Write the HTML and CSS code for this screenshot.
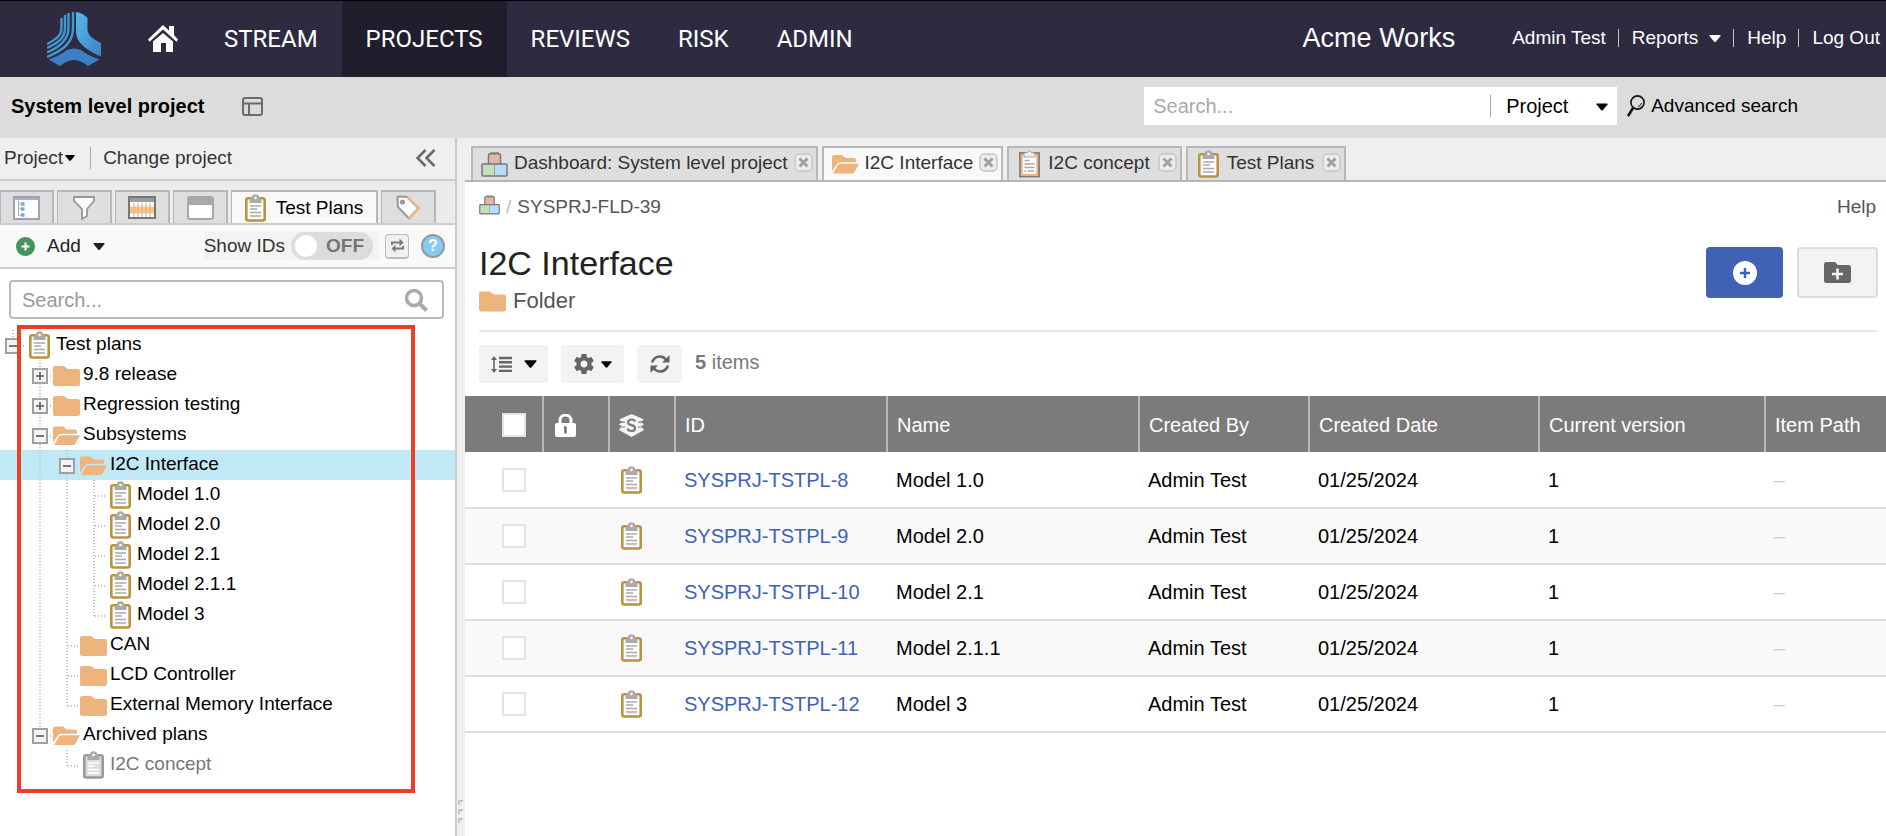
FILE: index.html
```
<!DOCTYPE html>
<html lang="en">

<head>
    <meta charset="UTF-8">
    <meta name="viewport" content="width=device-width, initial-scale=1.0">
    <title>I2C Interface - System level project</title>
    <link rel="stylesheet" href="styles.css">
</head>

<body>
    <!-- shared icons -->
    <svg class="sprite" aria-hidden="true">
        <symbol id="plan" viewBox="0 0 21 28">
            <rect x="1.3" y="4.3" width="18.4" height="22.2" rx="2" fill="#fff" stroke="#b8943c" stroke-width="2.6" />
            <path d="M4.500 9V6q0-2 2.300-2A3.700 3.700 0 0 1 14.200 4q2.300 0 2.300 2v3z" fill="#aaa" />
            <circle cx="10.500" cy="4" r="1.300" fill="#fff" />
            <path d="M5 12h11M5 15h7M5 18.500h11M5 22h11" stroke="#aaa" stroke-width="1.400" />
        </symbol>
        <symbol id="plan-gray" viewBox="0 0 21 28">
            <rect x="1.300" y="4.300" width="18.400" height="22.200" rx="2" fill="#ddd" stroke="#999" stroke-width="2.600" />
            <path d="M4.500 9V6q0-2 2.300-2A3.700 3.700 0 0 1 14.200 4q2.300 0 2.300 2v3z" fill="#aaa" />
            <circle cx="10.500" cy="4" r="1.300" fill="#fff" />
            <path d="M5 12h11M5 15h7M5 18.500h11M5 22h11" stroke="#fff" stroke-width="1.600" />
        </symbol>
        <symbol id="plan-case" viewBox="0 0 21 28">
            <rect x="1" y="3" width="19" height="23.500" fill="#fff" stroke="#7c7c7c" stroke-width="1.800" />
            <rect x="2.800" y="4.800" width="15.400" height="20" fill="none" stroke="#eeb27c" stroke-width="1.800" />
            <path d="M5 7V4q0-1 2-1.300h1.500a2 1.800 0 0 1 4 0H14q2 .3 2 1.300v3z" fill="#eee" stroke="#aaa" />
            <path d="M5.500 10.500h5M5.500 14h10M5.500 17.500h10M5.500 21h2M9 21h6" stroke="#aaa" stroke-width="1.400" />
        </symbol>
        <symbol id="folder" viewBox="0 0 27 20">
            <path d="M0 2q0-2 2-2h9l4 3h10q2 0 2 2v13q0 2-2 2H2q-2 0-2-2z" fill="#edb47e" />
        </symbol>
        <symbol id="folder-open" viewBox="0 0 27 19">
            <path d="M0 16V2q0-2 2-2h8l3.500 3H22q2 0 2 2v2.300H8.500Q6 7.300 5 9z" fill="#edb47e" />
            <path d="M1 18.600 6 10q.8-1.300 2.500-1.300H27L22.500 17q-.8 1.600-2.500 1.600z" fill="#edb47e" />
        </symbol>
        <symbol id="blocks" viewBox="0 0 27 25">
            <rect x="1" y="12" width="12.500" height="12" rx="1" fill="#c5dfbb" />
            <rect x="13.500" y="12" width="12.500" height="12" rx="1" fill="#b6defa" />
            <rect x="7.500" y="2" width="12" height="10" rx="1" fill="#e6b5ac" />
            <path d="M7.500 12V3q0-1 1-1h1.500V1h2.500v1h2V1H17v1h1.500q1 0 1 1v9M1 23V13q0-1 1-1h23q1 0 1 1v10q0 1-1 1H2q-1 0-1-1z" fill="none" stroke="#777" stroke-width="1.500" />
            <path d="M13.500 12v12" stroke="#9a9a9a" />
        </symbol>
        <symbol id="close" viewBox="0 0 19 19">
            <rect x="1" y="1" width="17" height="17" rx="4" fill="#ececec" stroke="#c4c4c4" stroke-width="1.400" />
            <path d="m5.500 5.500 8 8m0-8-8 8" stroke="#a2a2a2" stroke-width="3" />
        </symbol>
        <symbol id="arrow" viewBox="0 0 12 7">
            <path d="M1 0h10q1 0 .5 1L7 6.500q-1 1-2 0L.5 1Q0 0 1 0z" fill="currentColor" />
        </symbol>
        <symbol id="minus" viewBox="0 0 16 16">
            <rect x="1" y="1" width="14" height="14" fill="#f3f3f3" stroke="#a0a0a0" stroke-width="2" />
            <path d="M4 8h8" stroke="#555" stroke-width="1.600" />
        </symbol>
        <symbol id="plus" viewBox="0 0 16 16">
            <rect x="1" y="1" width="14" height="14" fill="#f3f3f3" stroke="#a0a0a0" stroke-width="2" />
            <path d="M4 8h8M8 4v8" stroke="#555" stroke-width="1.600" />
        </symbol>
    </svg>

    <header class="navbar">
        <svg class="logo" viewBox="0 0 54 55" role="img" aria-label="Logo">
            <defs>
                <linearGradient id="g1" x1="0" y1="0" x2="1" y2="1">
                    <stop offset="0" stop-color="#58b8ea" />
                    <stop offset="1" stop-color="#3b83c4" />
                </linearGradient>
            </defs>
            <path d="M29 0q7 1 11.500 6v12q0 7 13.500 13v13.500Q29 34 29 20z" fill="url(#g1)" />
            <path d="M26 0v16c0 14-9 22-26 29M21.500 1v15C21.500 28 13 35 0 40.500M18 3v13C18 26 11 31 0 36M14.500 6v10C14.500 23 10 27 0 32" fill="none" stroke="#4199d3" stroke-width="2.400" />
            <path d="M1.500 47.500Q14 43 20 38q7-3 14 0 6 5 18.500 9.500L41 54q-14-12-28 0z" fill="#3b7fc6" />
        </svg>
        <nav class="menu">
            <a class="home" href="#" aria-label="Home">
                <svg width="30" height="27" viewBox="0 0 30 27" fill="#fff">
                    <path d="M5 16.500 15 8l10 8.500V27h-7v-9h-5v9H5z" />
                    <path d="m15 0 6 5.500V1h5v9l4 4.500-1.500 2.300L15 4.500 1.500 16.800 0 14.500z" />
                    <path d="M3.500 16.300 15 6l11.500 10.300" fill="none" stroke="#2e2b41" />
                </svg>
            </a>
            <a href="#">STREAM</a>
            <a class="active" href="#">PROJECTS</a>
            <a href="#">REVIEWS</a>
            <a href="#">RISK</a>
            <a href="#">ADMIN</a>
        </nav>
        <span class="company">Acme Works</span>
        <div class="user-links">
            <a href="#">Admin Test</a>
            <a href="#">Reports <svg class="caret" width="12" height="7"><use href="#arrow" /></svg></a>
            <a href="#">Help</a>
            <a href="#">Log Out</a>
        </div>
    </header>

    <div class="project-bar">
        <h1>System level project</h1>
        <a class="layout-link" href="#" aria-label="Project layout">
            <svg width="21" height="19" viewBox="0 0 21 19" fill="none" stroke="#6b6b6b" stroke-width="2">
                <rect x="1" y="1" width="19" height="17" rx="2" />
                <path d="M1 6.500h19M7 6.500V18" />
            </svg>
        </a>
        <form class="global-search">
            <input type="text" placeholder="Search..." aria-label="Search projects">
            <div class="scope">
                <select aria-label="Search scope">
                    <option>Project</option>
                </select>
                <svg class="scope-arrow" width="12" height="8"><use href="#arrow" /></svg>
            </div>
        </form>
        <a class="advanced" href="#">
            <svg width="18" height="22" viewBox="0 0 18 22" fill="none" stroke="#111">
                <circle cx="10.500" cy="7.500" r="6.600" stroke-width="1.600" />
                <path d="m6 13-5 8" stroke-width="2.600" />
                <path d="M14.500 8q-.5 3-3.500 3.500" />
            </svg>
            Advanced search
        </a>
    </div>

    <div class="workspace">
        <aside class="sidebar">
            <div class="side-head">
                <a class="project-link" href="#">Project<svg width="10" height="6"><use href="#arrow" /></svg></a>
                <a class="change-link" href="#">Change project</a>
                <button class="collapse" aria-label="Collapse">
                    <svg width="20" height="18" viewBox="0 0 20 18" fill="none" stroke="#6b6b6b" stroke-width="2.600">
                        <path d="m9.500 1-8 8 8 8M18.500 1l-8 8 8 8" />
                    </svg>
                </button>
            </div>
            <div class="side-tabs">
                <button aria-label="Explorer">
                    <svg width="27" height="24" viewBox="0 0 27 24">
                        <rect x="1" y="1" width="25" height="22" fill="#fff" stroke="#9aa3b3" stroke-width="2" />
                        <path d="M1 3h25" stroke="#9fb4d0" stroke-width="2" />
                        <path d="M5.500 5v15M5.500 8h3M5.500 13h3M5.500 19h3" stroke="#9bb0c8" />
                        <path d="M8 8h3.500M8 13h3.500M8 19h3.500" stroke="#7fa9d8" stroke-width="3.500" />
                    </svg>
                </button>
                <button aria-label="Filters">
                    <svg width="22" height="24" viewBox="0 0 22 24">
                        <path d="M1 1h20v4l-7 8v7l-5 3V13L1 5z" fill="#fafafa" stroke="#999" stroke-width="1.800" />
                    </svg>
                </button>
                <button aria-label="Releases">
                    <svg width="28" height="23" viewBox="0 0 28 23">
                        <rect x="1" y="1" width="26" height="21" fill="#fff" stroke="#777" stroke-width="2" />
                        <path d="M2 4h24" stroke="#9c9c9c" stroke-width="4" />
                        <path d="M6 7v14M10 7v14M14 7v14M18 7v14M22 7v14" stroke="#bbb" stroke-width="1.200" />
                        <path d="M2 14h24" stroke="#f8c674" stroke-width="7" />
                        <path d="M6 10.500v7M10 10.500v7M14 10.500v7M18 10.500v7M22 10.500v7" stroke="#eeb088" stroke-width="1.200" />
                    </svg>
                </button>
                <button aria-label="Components">
                    <svg width="27" height="24" viewBox="0 0 27 24">
                        <rect x="1" y="1" width="25" height="22" rx="2" fill="#fff" stroke="#a8a8a8" stroke-width="2" />
                        <path d="M2 5h23" stroke="#a8a8a8" stroke-width="8" />
                    </svg>
                </button>
                <button class="active"><svg width="21" height="28"><use href="#plan" /></svg>Test Plans</button>
                <button aria-label="Tags">
                    <svg width="24" height="25" viewBox="0 0 24 25" fill="#fff" stroke-width="2">
                        <path d="M1.500 3q0-1.500 1.500-1.500L11 2l11.500 11-9.500 10.500L2 12z" stroke="#999" />
                        <path d="m11 2 11.500 11-9.500 10.500" fill="none" stroke="#edb47e" stroke-width="2.400" />
                        <circle cx="6.500" cy="7" r="2.600" fill="#999" />
                    </svg>
                </button>
            </div>
            <div class="side-tools">
                <button class="add">
                    <svg width="19" height="19" viewBox="0 0 19 19">
                        <circle cx="9.500" cy="9.500" r="9.500" fill="#43955c" />
                        <path d="M5.500 9.500h8m-4-4v8" stroke="#fff" stroke-width="2" />
                    </svg>
                    Add
                    <svg width="12" height="7"><use href="#arrow" /></svg>
                </button>
                <label class="switch">
                    Show IDs
                    <input type="checkbox">
                    <span class="track"><span class="knob"></span>OFF</span>
                </label>
                <button class="sync" aria-label="Sync tree">
                    <svg width="15" height="15" viewBox="0 0 15 15" fill="none" stroke="#7b7b7b" stroke-width="2">
                        <path d="M2 7V4.500h8M13 8v2.500H5" />
                        <path d="M9.500.5v8l4-4zM5.500 6.500v8l-4-4z" fill="#7b7b7b" stroke="none" />
                    </svg>
                </button>
                <button class="hint" aria-label="Help">?</button>
            </div>
            <div class="tree-search">
                <input type="text" placeholder="Search..." aria-label="Search tree">
                <svg width="24" height="24" viewBox="0 0 24 24" fill="none" stroke="#aaa">
                    <circle cx="10" cy="10" r="7.500" stroke-width="3.500" />
                    <path d="m15.500 15.500 7 7" stroke-width="4" />
                </svg>
            </div>
            <div class="tree">
                <ul>
                    <li>
                        <i class="v end h"><button aria-label="Collapse"><svg><use href="#minus" /></svg></button></i>
                        <svg class="plan"><use href="#plan" /></svg><a href="#">Test plans</a>
                    </li>
                    <li>
                        <i></i><i class="v h"><button aria-label="Expand"><svg><use href="#plus" /></svg></button></i>
                        <svg class="folder"><use href="#folder" /></svg><a href="#">9.8 release</a>
                    </li>
                    <li>
                        <i></i><i class="v h"><button aria-label="Expand"><svg><use href="#plus" /></svg></button></i>
                        <svg class="folder"><use href="#folder" /></svg><a href="#">Regression testing</a>
                    </li>
                    <li>
                        <i></i><i class="v h"><button aria-label="Collapse"><svg><use href="#minus" /></svg></button></i>
                        <svg class="folder"><use href="#folder-open" /></svg><a href="#">Subsystems</a>
                    </li>
                    <li class="selected">
                        <i></i><i class="v"></i><i class="v h"><button aria-label="Collapse"><svg><use href="#minus" /></svg></button></i>
                        <svg class="folder"><use href="#folder-open" /></svg><a href="#">I2C Interface</a>
                    </li>
                    <li>
                        <i></i><i class="v"></i><i class="v"></i><i class="v h"></i>
                        <svg class="plan"><use href="#plan" /></svg><a href="#">Model 1.0</a>
                    </li>
                    <li>
                        <i></i><i class="v"></i><i class="v"></i><i class="v h"></i>
                        <svg class="plan"><use href="#plan" /></svg><a href="#">Model 2.0</a>
                    </li>
                    <li>
                        <i></i><i class="v"></i><i class="v"></i><i class="v h"></i>
                        <svg class="plan"><use href="#plan" /></svg><a href="#">Model 2.1</a>
                    </li>
                    <li>
                        <i></i><i class="v"></i><i class="v"></i><i class="v h"></i>
                        <svg class="plan"><use href="#plan" /></svg><a href="#">Model 2.1.1</a>
                    </li>
                    <li>
                        <i></i><i class="v"></i><i class="v"></i><i class="v end h"></i>
                        <svg class="plan"><use href="#plan" /></svg><a href="#">Model 3</a>
                    </li>
                    <li>
                        <i></i><i class="v"></i><i class="v h"></i>
                        <svg class="folder"><use href="#folder" /></svg><a href="#">CAN</a>
                    </li>
                    <li>
                        <i></i><i class="v"></i><i class="v h"></i>
                        <svg class="folder"><use href="#folder" /></svg><a href="#">LCD Controller</a>
                    </li>
                    <li>
                        <i></i><i class="v"></i><i class="v end h"></i>
                        <svg class="folder"><use href="#folder" /></svg><a href="#">External Memory Interface</a>
                    </li>
                    <li>
                        <i></i><i class="v end h"><button aria-label="Collapse"><svg><use href="#minus" /></svg></button></i>
                        <svg class="folder"><use href="#folder-open" /></svg><a href="#">Archived plans</a>
                    </li>
                    <li class="archived">
                        <i></i><i></i><i class="v end h"></i>
                        <svg class="plan"><use href="#plan-gray" /></svg><a href="#">I2C concept</a>
                    </li>
                </ul>
                <div class="highlight"></div>
            </div>
        </aside>

        <div class="splitter"><span></span><span></span><span></span></div>

        <main>
            <div class="tabs">
                <div class="tab">
                    <svg width="27" height="25"><use href="#blocks" /></svg>
                    <a href="#">Dashboard: System level project</a>
                    <button aria-label="Close"><svg width="19" height="19"><use href="#close" /></svg></button>
                </div>
                <div class="tab active">
                    <svg width="27" height="19"><use href="#folder-open" /></svg>
                    <a href="#">I2C Interface</a>
                    <button aria-label="Close"><svg width="19" height="19"><use href="#close" /></svg></button>
                </div>
                <div class="tab plan-tab">
                    <svg width="21" height="28"><use href="#plan-case" /></svg>
                    <a href="#">I2C concept</a>
                    <button aria-label="Close"><svg width="19" height="19"><use href="#close" /></svg></button>
                </div>
                <div class="tab plan-tab">
                    <svg width="21" height="28"><use href="#plan" /></svg>
                    <a href="#">Test Plans</a>
                    <button aria-label="Close"><svg width="19" height="19"><use href="#close" /></svg></button>
                </div>
            </div>

            <div class="content">
                <div class="breadcrumb">
                    <svg width="21" height="20"><use href="#blocks" /></svg>
                    <span class="slash">/</span>
                    <a href="#">SYSPRJ-FLD-39</a>
                    <a class="help" href="#">Help</a>
                </div>
                <div class="title-row">
                    <div class="title">
                        <h2>I2C Interface</h2>
                        <p><svg width="27" height="21"><use href="#folder" /></svg>Folder</p>
                    </div>
                    <div class="actions">
                        <button class="primary" aria-label="Add item">
                            <svg width="24" height="24" viewBox="0 0 24 24">
                                <circle cx="12" cy="12" r="12" fill="#fff" />
                                <path d="M7 12h10M12 7v10" stroke="#3f62b5" stroke-width="2.400" />
                            </svg>
                        </button>
                        <button class="secondary" aria-label="Add folder">
                            <svg width="27" height="21" viewBox="0 0 27 21">
                                <path d="M0 2.500Q0 0 2.500 0h8.500l3 3h10.500Q27 3 27 5.500v13q0 2.500-2.500 2.500h-22Q0 21 0 18.500z" fill="#666" />
                                <path d="M8 12h11M13.500 6.500v11" stroke="#f3f3f3" stroke-width="2.600" />
                            </svg>
                        </button>
                    </div>
                </div>
                <div class="list-tools">
                    <button class="density" aria-label="Row height">
                        <svg width="21" height="17" viewBox="0 0 21 17" fill="#666">
                            <path d="M8 .8h13v2.400H8zM8 5.100h13v2.400H8zM8 9.400h13v2.400H8zM8 13.700h13v2.400H8z" />
                            <path d="M3 0 0 4h2.200v9H0l3 4 3-4H3.800V4H6z" />
                        </svg>
                        <svg width="13" height="8"><use href="#arrow" /></svg>
                    </button>
                    <button class="settings" aria-label="Settings">
                        <svg width="20" height="20" viewBox="2 2 20 20" fill="#666">
                            <path d="M19.430 12.980c.04-.32.070-.64.070-.98s-.03-.66-.07-.98l2.110-1.650c.19-.15.240-.42.120-.64l-2-3.460c-.12-.22-.39-.3-.61-.22l-2.490 1c-.52-.4-1.080-.73-1.690-.98l-.38-2.650C14.460 2.180 14.250 2 14 2h-4c-.25 0-.46.180-.49.420l-.38 2.650c-.61.250-1.170.59-1.690.98l-2.490-1c-.23-.09-.49 0-.61.220l-2 3.460c-.13.220-.07.490.120.640l2.110 1.650c-.04.320-.07.650-.07.980s.03.660.070.980l-2.110 1.650c-.19.150-.24.420-.12.640l2 3.460c.12.220.390.300.610.220l2.490-1c.52.400 1.080.730 1.690.980l.38 2.650c.03.240.240.420.490.420h4c.25 0 .46-.18.490-.42l.38-2.650c.61-.25 1.170-.59 1.690-.98l2.490 1c.23.090.490 0 .61-.22l2-3.460c.12-.22.070-.49-.12-.64l-2.110-1.650zM12 15.500c-1.930 0-3.500-1.570-3.500-3.500s1.570-3.500 3.500-3.500 3.500 1.570 3.500 3.500-1.570 3.500-3.500 3.500z" />
                        </svg>
                        <svg width="11" height="7"><use href="#arrow" /></svg>
                    </button>
                    <button class="refresh" aria-label="Refresh">
                        <svg width="20" height="18" viewBox="0 0 20 18">
                            <path d="M2 7.500Q4 1.500 10 1.500q3.500 0 6 3M18 10.500q-2 6-8 6-3.500 0-6-3" fill="none" stroke="#666" stroke-width="2.600" />
                            <path d="M19.500 0v7.500H12zM.5 18v-7.500H8z" fill="#666" />
                        </svg>
                    </button>
                    <span><b>5</b> items</span>
                </div>
            </div>

            <table>
                <colgroup>
                    <col class="c-check">
                    <col class="c-icon">
                    <col class="c-icon">
                    <col class="c-id">
                    <col class="c-name">
                    <col class="c-by">
                    <col class="c-date">
                    <col class="c-version">
                    <col>
                </colgroup>
                <thead>
                    <tr>
                        <th class="check"><input type="checkbox" aria-label="Select all"></th>
                        <th>
                            <svg class="lock" width="21" height="23" viewBox="0 0 21 23">
                                <path d="M5 10V6.500a5.500 5.500 0 0 1 11 0V10" fill="none" stroke="#fff" stroke-width="3" />
                                <rect y="9" width="21" height="14" rx="2" fill="#fff" />
                                <path d="M10.500 12.500v7M9 13.500h2" stroke="#777" stroke-width="2.600" />
                            </svg>
                        </th>
                        <th>
                            <svg width="25" height="23" viewBox="0 0 25 23">
                                <path d="M12.500 0 25 5.500l-3 2.300 3 2.700-2.500 1.500L25 16l-12.500 7L0 16l2.500-4L0 10.500l3-2.700-3-2.300z" fill="#f3f3f3" />
                                <path d="M1 8.200h5M1 13h5M19 8.200h5M19 13h5" stroke="#7b7b7b" stroke-width="1.200" />
                                <path d="M16 7.500Q15.500 5.500 12.500 5.500T9 8.300q0 2.200 3.500 2.900t3.500 3q0 2.800-3.500 2.800T8.800 14.500" fill="none" stroke="#7b7b7b" stroke-width="2.200" />
                            </svg>
                        </th>
                        <th>ID</th>
                        <th>Name</th>
                        <th>Created By</th>
                        <th>Created Date</th>
                        <th>Current version</th>
                        <th>Item Path</th>
                    </tr>
                </thead>
                <tbody>
                    <tr>
                        <td class="check"><input type="checkbox" aria-label="Select Model 1.0"></td>
                        <td></td>
                        <td class="type"><svg width="21" height="28"><use href="#plan" /></svg></td>
                        <td><a href="#">SYSPRJ-TSTPL-8</a></td>
                        <td>Model 1.0</td>
                        <td>Admin Test</td>
                        <td>01/25/2024</td>
                        <td>1</td>
                        <td class="none">–</td>
                    </tr>
                    <tr>
                        <td class="check"><input type="checkbox" aria-label="Select Model 2.0"></td>
                        <td></td>
                        <td class="type"><svg width="21" height="28"><use href="#plan" /></svg></td>
                        <td><a href="#">SYSPRJ-TSTPL-9</a></td>
                        <td>Model 2.0</td>
                        <td>Admin Test</td>
                        <td>01/25/2024</td>
                        <td>1</td>
                        <td class="none">–</td>
                    </tr>
                    <tr>
                        <td class="check"><input type="checkbox" aria-label="Select Model 2.1"></td>
                        <td></td>
                        <td class="type"><svg width="21" height="28"><use href="#plan" /></svg></td>
                        <td><a href="#">SYSPRJ-TSTPL-10</a></td>
                        <td>Model 2.1</td>
                        <td>Admin Test</td>
                        <td>01/25/2024</td>
                        <td>1</td>
                        <td class="none">–</td>
                    </tr>
                    <tr>
                        <td class="check"><input type="checkbox" aria-label="Select Model 2.1.1"></td>
                        <td></td>
                        <td class="type"><svg width="21" height="28"><use href="#plan" /></svg></td>
                        <td><a href="#">SYSPRJ-TSTPL-11</a></td>
                        <td>Model 2.1.1</td>
                        <td>Admin Test</td>
                        <td>01/25/2024</td>
                        <td>1</td>
                        <td class="none">–</td>
                    </tr>
                    <tr>
                        <td class="check"><input type="checkbox" aria-label="Select Model 3"></td>
                        <td></td>
                        <td class="type"><svg width="21" height="28"><use href="#plan" /></svg></td>
                        <td><a href="#">SYSPRJ-TSTPL-12</a></td>
                        <td>Model 3</td>
                        <td>Admin Test</td>
                        <td>01/25/2024</td>
                        <td>1</td>
                        <td class="none">–</td>
                    </tr>
                </tbody>
            </table>
        </main>
    </div>
</body>

</html>
```

FILE: styles.css
```
* {
    box-sizing: border-box;
}

body {
    display: flex;
    flex-direction: column;
    min-height: 100vh;
    margin: 0;
    font-family: "Liberation Sans", Arial, sans-serif;
    font-size: 19px;
    line-height: 22px;
    color: #000;
    background: #fff;
}

a {
    color: inherit;
    text-decoration: none;
}

ul,
h1,
h2,
p {
    margin: 0;
    padding: 0;
    list-style: none;
}

button,
input,
select {
    font: inherit;
    color: inherit;
    margin: 0;
    padding: 0;
    border: 0;
    background: none;
}

svg {
    flex: none;
    display: block;
}

.sprite {
    position: absolute;
    width: 0;
    height: 0;
}

/* top navigation */
.navbar {
    display: flex;
    align-items: center;
    height: 77px;
    padding: 0 6px 0 47px;
    border-top: 1px solid #000;
    background: #2e2b41;
    color: #fff;
    white-space: nowrap;
}

.logo {
    width: 54px;
    height: 55px;
}

.menu {
    display: flex;
    align-self: stretch;
    margin-left: 47px;
    font-family: Roboto, sans-serif;
    font-size: 24px;
}

.menu a {
    display: flex;
    align-items: center;
    padding: 0 24px;
}

.menu .home {
    padding: 0 22px 2px 0;
}

.menu .active {
    background: #201e2d;
}

.company {
    margin-left: auto;
    padding-bottom: 2px;
    font-size: 27px;
}

.user-links {
    display: flex;
    margin-left: 45px;
    padding-bottom: 2px;
}

.user-links a {
    display: flex;
    align-items: center;
    padding: 0 0 0 12px;
}

.user-links a + a::before {
    content: "";
    width: 1px;
    height: 18px;
    margin-right: 13px;
    background: #c9c6bd;
}

.caret {
    margin-left: 11px;
}

/* project bar */
.project-bar {
    display: flex;
    align-items: center;
    height: 61px;
    padding: 0 88px 3px 11px;
    background: #dcdcdc;
}

.project-bar h1 {
    font-size: 20px;
    font-weight: bold;
}

.layout-link {
    margin-left: 38px;
}

.global-search {
    display: flex;
    align-items: center;
    width: 473px;
    height: 38px;
    margin-left: auto;
    background: #fff;
    font-size: 20px;
}

.global-search input {
    flex: 1;
    min-width: 0;
    padding-left: 9px;
    outline: none;
}

.global-search input::placeholder {
    color: #aaa;
}

.scope {
    position: relative;
    width: 127px;
    border-left: 1px solid #b0a992;
}

.scope select {
    width: 100%;
    padding-left: 15px;
    appearance: none;
}

.scope-arrow {
    position: absolute;
    right: 9px;
    top: 8px;
    pointer-events: none;
}

.advanced {
    display: flex;
    align-items: center;
    gap: 6px;
    margin-left: 10px;
}

/* sidebar */
.workspace {
    display: flex;
    flex: 1;
}

.sidebar {
    flex: none;
    width: 457px;
    border-right: 2px solid #ccc;
}

.side-head {
    display: flex;
    align-items: center;
    height: 43px;
    padding: 0 19px 2px 4px;
    border-bottom: 2px solid #ccc;
    background: #efefef;
    color: #333;
}

.project-link {
    display: flex;
    align-items: center;
    gap: 2px;
    color: #333;
}

.project-link svg {
    color: #000;
}

.change-link {
    margin-left: 15px;
    padding-left: 12px;
    border-left: 1px solid #b0a992;
}

.collapse {
    margin-left: auto;
}

.side-tabs {
    display: flex;
    align-items: flex-end;
    gap: 3px;
    height: 44px;
    border-bottom: 2px solid #ccc;
    background: #ebebeb;
}

.side-tabs button {
    display: flex;
    align-items: center;
    justify-content: center;
    width: 55px;
    height: 33px;
    border: 1px solid #b8b8b8;
    border-width: 2px 2px 0 1px;
    background: #dedede;
}

.side-tabs button:first-child {
    width: 54px;
}

.side-tabs .active {
    gap: 10px;
    width: 147px;
    background: #f9f9f9;
}

.side-tools {
    display: flex;
    align-items: center;
    height: 44px;
    padding: 0 10px 0 16px;
    border-bottom: 2px solid #ccc;
    background: #f9f9f9;
}

.add {
    display: flex;
    align-items: center;
    gap: 12px;
    color: #222;
}

.switch {
    display: flex;
    align-items: center;
    gap: 6px;
    height: 28px;
    margin-left: auto;
    padding-right: 6px;
    background: #f3f3f3;
    color: #333;
}

.switch input {
    position: absolute;
    opacity: 0;
}

.track {
    display: flex;
    align-items: center;
    justify-content: space-between;
    width: 82px;
    height: 28px;
    padding: 0 9px 0 4px;
    border-radius: 14px;
    background: #dcdcdc;
    color: #757575;
    font-weight: bold;
}

.knob {
    width: 22px;
    height: 22px;
    border-radius: 50%;
    background: #fff;
}

.sync {
    display: flex;
    align-items: center;
    justify-content: center;
    width: 24px;
    height: 25px;
    margin-left: 6px;
    border: 1px solid #bbb;
    border-bottom-width: 2px;
    border-radius: 4px;
    background: #f0f0f0;
}

.hint {
    width: 24px;
    height: 24px;
    margin-left: 12px;
    border: 2px solid #999;
    border-radius: 50%;
    background: #82cdf1;
    color: #fff;
    font-size: 16px;
    font-weight: bold;
    line-height: 20px;
}

.tree-search {
    display: flex;
    align-items: center;
    height: 39px;
    margin: 11px 11px 11px 9px;
    padding: 0 14px 0 11px;
    border: 2px solid #bbb;
    border-radius: 4px;
    font-size: 20px;
}

.tree-search input {
    flex: 1;
    min-width: 0;
    outline: none;
}

.tree-search input::placeholder {
    color: #999;
}

/* tree */
.tree {
    position: relative;
}

.tree li {
    display: flex;
    height: 30px;
}

.tree li a {
    padding-top: 3px;
    white-space: nowrap;
}

.tree .selected {
    background: #c1e8f7;
}

.tree .archived {
    color: #777;
}

.tree i {
    flex: none;
    width: 27px;
    padding: 8px 0 0 5px;
    background-repeat: no-repeat;
    --down: repeating-linear-gradient(to bottom, #c4c4c4 0 1px, transparent 1px 3px);
    --across: repeating-linear-gradient(to right, #c4c4c4 0 1px, transparent 1px 3px);
}

.tree .v {
    background-image: var(--down);
    background-position: 12px 0;
    background-size: 2px 30px;
}

.tree .h {
    background-image: var(--down), var(--across);
    background-position: 12px 0, 14px 15px;
    background-size: 2px 30px, 12px 2px;
}

.tree .end {
    background-size: 2px 16px, 12px 2px;
}

.tree i button,
.tree i svg {
    display: block;
    width: 16px;
    height: 16px;
}

.tree .plan {
    width: 21px;
    height: 28px;
    margin: 1px 6px 0 2px;
}

.tree .folder {
    width: 27px;
    height: 20px;
    margin: 6px 3px 0 -1px;
}

.highlight {
    position: absolute;
    top: -5px;
    right: 40px;
    bottom: -13px;
    left: 17px;
    border: 4px solid #e94026;
    pointer-events: none;
}

.splitter {
    display: flex;
    flex: none;
    flex-direction: column;
    justify-content: flex-end;
    gap: 4px;
    width: 8px;
    padding: 0 2px 13px 1px;
    background: #efefef;
}

.splitter span {
    height: 5px;
    border: 1px solid #c4c4c4;
    border-width: 2px 0 0 2px;
}

/* main area */
main {
    flex: 1;
    min-width: 0;
}

.tabs {
    display: flex;
    align-items: flex-end;
    gap: 4px;
    height: 44px;
    padding-left: 6px;
    border-bottom: 2px solid #b5b5b5;
    background: #efefef;
    color: #333;
    white-space: nowrap;
}

.tab {
    display: flex;
    align-items: center;
    gap: 6px;
    height: 34px;
    padding: 0 3px 0 8px;
    border: 2px solid #b8b8b8;
    border-bottom: 0;
    background: #dedede;
}

.tab.active {
    background: #f9f9f9;
}

.plan-tab {
    gap: 8px;
    padding-left: 10px;
}

.tab a {
    padding-bottom: 2px;
}

.tab button {
    margin: 0 0 4px;
}

.content {
    padding: 0 8px 0 14px;
}

.breadcrumb {
    display: flex;
    align-items: center;
    padding-top: 13px;
    color: #555;
}

.breadcrumb svg {
    margin: 0 6px 4px 0;
}

.slash {
    margin-right: 6px;
    color: #bbb;
}

.help {
    margin-left: auto;
    padding-right: 2px;
}

.title-row {
    display: flex;
    justify-content: space-between;
    align-items: flex-start;
    height: 113px;
    padding-top: 24px;
    border-bottom: 2px solid #e8e8e8;
}

.title-row h2 {
    color: #222;
    font-size: 34px;
    font-weight: normal;
    line-height: 40px;
}

.title-row p {
    display: flex;
    align-items: center;
    gap: 7px;
    margin-top: 7px;
    color: #555;
    font-size: 22px;
}

.actions {
    display: flex;
    gap: 14px;
    padding-top: 4px;
}

.actions button {
    display: flex;
    align-items: center;
    justify-content: center;
    width: 77px;
    height: 51px;
    border-radius: 4px;
}

.actions .primary {
    background: #3f62b5;
}

.actions .secondary {
    width: 81px;
    border: 2px solid #dcdcdc;
    background: #f3f3f3;
}

.list-tools {
    display: flex;
    gap: 13px;
    padding: 13px 0;
    color: #777;
    font-size: 20px;
}

.list-tools button {
    display: flex;
    align-items: center;
    justify-content: center;
    width: 45px;
    height: 38px;
    border-radius: 4px;
    background: #f3f3f3;
    color: #000;
}

.list-tools .density {
    gap: 12px;
    width: 69px;
}

.list-tools .settings {
    gap: 7px;
    width: 63px;
}

.list-tools span {
    padding-top: 6px;
}

/* items table */
table {
    width: 100%;
    table-layout: fixed;
    border-collapse: collapse;
    font-size: 20px;
}

.c-check {
    width: 78px;
}

.c-icon {
    width: 66px;
}

.c-id {
    width: 212px;
}

.c-name {
    width: 252px;
}

.c-by {
    width: 170px;
}

.c-date {
    width: 230px;
}

.c-version {
    width: 226px;
}

th,
td {
    height: 56px;
    padding: 0 0 0 9px;
    text-align: left;
    font-weight: normal;
    white-space: nowrap;
}

th {
    padding-top: 2px;
    border-right: 2px solid #b8b8b8;
    background: #7b7b7b;
    color: #fff;
}

th:last-child {
    border-right: 0;
}

th .lock {
    margin-left: 2px;
}

td {
    border-bottom: 2px solid #dedede;
}

tbody tr:nth-child(even) {
    background: #f9f9f9;
}

td a {
    color: #3f62b5;
}

.check {
    padding-left: 37px;
}

.check input {
    display: block;
    width: 24px;
    height: 24px;
    border: 2px solid #e3e3e3;
    background: #fff;
    appearance: none;
}

.type {
    padding-left: 12px;
}

.none {
    color: #ccc;
}
```
